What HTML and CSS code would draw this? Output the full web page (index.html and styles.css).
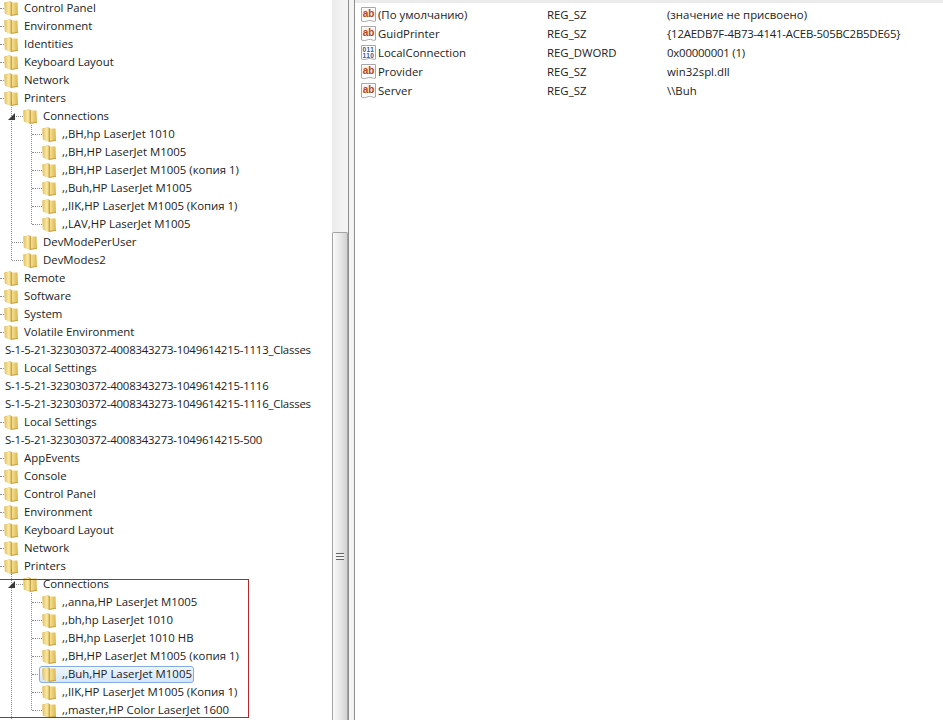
FILE: index.html
```html
<!DOCTYPE html>
<html lang="ru">
<head>
<meta charset="utf-8">
<title>Registry Editor</title>
<link rel="stylesheet" href="styles.css">
</head>
<body>
<svg class="defs" width="0" height="0" aria-hidden="true">
  <defs>
    <linearGradient id="fb" x1="0" y1="0" x2="1" y2="0"><stop offset="0" stop-color="#d3a93f"/><stop offset=".6" stop-color="#f3dc8b"/><stop offset="1" stop-color="#dcb44e"/></linearGradient>
    <linearGradient id="ff" x1="0" y1="0" x2="1" y2="0"><stop offset="0" stop-color="#e6c25a"/><stop offset=".65" stop-color="#f9e9a8"/><stop offset="1" stop-color="#eccb68"/></linearGradient>
    <symbol id="folder" viewBox="0 0 14 15">
      <path d="M.5 1.500 7 0l.5 1.500h6L14 13.500 7.500 15 1 12.500Z" fill="url(#fb)"/>
      <path d="M.5 1.500 7 .5v14.300L.8 12.500Z" fill="url(#ff)"/>
      <path d="M7.300 14.800V1" stroke="#b08a35" stroke-width=".8" fill="none"/>
      <path d="M7.500 14.300 14 13.300" stroke="#c99f40" stroke-width="1" fill="none"/>
    </symbol>
    <symbol id="ab" viewBox="0 0 16 16">
      <path d="M.5.500h14v13.500c-2 1.500-4.500-1.500-7-.5s-5 1.500-7 .5Z" fill="#fff" stroke="#a8a8a8"/>
      <path d="M1.500 2h12v8h-12Z" fill="#fdf1ea"/>
      <text x="7.500" y="9.500" text-anchor="middle" class="abtext">ab</text>
    </symbol>
    <symbol id="bin" viewBox="0 0 16 16">
      <path d="M.5.500h14v13.500c-2 1.500-4.500-1.500-7-.5s-5 1.500-7 .5Z" fill="#fff" stroke="#a8a8a8"/>
      <text x="7.500" y="6.500" text-anchor="middle" class="bintext">011</text>
      <text x="7.500" y="12.500" text-anchor="middle" class="bintext">110</text>
    </symbol>
  </defs>
</svg>
<main class="window">
  <nav class="tree">
    <div class="row l0"><svg class="folder"><use href="#folder"/></svg><span>Control Panel</span></div>
    <div class="row l0"><svg class="folder"><use href="#folder"/></svg><span>Environment</span></div>
    <div class="row l0"><svg class="folder"><use href="#folder"/></svg><span>Identities</span></div>
    <div class="row l0"><svg class="folder"><use href="#folder"/></svg><span>Keyboard Layout</span></div>
    <div class="row l0"><svg class="folder"><use href="#folder"/></svg><span>Network</span></div>
    <div class="row l0"><svg class="folder"><use href="#folder"/></svg><span>Printers</span></div>
    <div class="sub">
      <div class="row l1"><i class="arrow"></i><svg class="folder"><use href="#folder"/></svg><span>Connections</span></div>
      <div class="sub2">
        <div class="row l2"><svg class="folder"><use href="#folder"/></svg><span>,,BH,hp LaserJet 1010</span></div>
        <div class="row l2"><svg class="folder"><use href="#folder"/></svg><span>,,BH,HP LaserJet M1005</span></div>
        <div class="row l2"><svg class="folder"><use href="#folder"/></svg><span>,,BH,HP LaserJet M1005 (копия 1)</span></div>
        <div class="row l2"><svg class="folder"><use href="#folder"/></svg><span>,,Buh,HP LaserJet M1005</span></div>
        <div class="row l2"><svg class="folder"><use href="#folder"/></svg><span>,,IIK,HP LaserJet M1005 (Копия 1)</span></div>
        <div class="row l2"><svg class="folder"><use href="#folder"/></svg><span>,,LAV,HP LaserJet M1005</span></div>
      </div>
      <div class="row l1"><svg class="folder"><use href="#folder"/></svg><span>DevModePerUser</span></div>
      <div class="row l1"><svg class="folder"><use href="#folder"/></svg><span>DevModes2</span></div>
    </div>
    <div class="row l0"><svg class="folder"><use href="#folder"/></svg><span>Remote</span></div>
    <div class="row l0"><svg class="folder"><use href="#folder"/></svg><span>Software</span></div>
    <div class="row l0"><svg class="folder"><use href="#folder"/></svg><span>System</span></div>
    <div class="row l0"><svg class="folder"><use href="#folder"/></svg><span>Volatile Environment</span></div>
    <div class="row root"><span>S-1-5-21-323030372-4008343273-1049614215-1113_Classes</span></div>
    <div class="row l0"><svg class="folder"><use href="#folder"/></svg><span>Local Settings</span></div>
    <div class="row root"><span>S-1-5-21-323030372-4008343273-1049614215-1116</span></div>
    <div class="row root"><span>S-1-5-21-323030372-4008343273-1049614215-1116_Classes</span></div>
    <div class="row l0"><svg class="folder"><use href="#folder"/></svg><span>Local Settings</span></div>
    <div class="row root"><span>S-1-5-21-323030372-4008343273-1049614215-500</span></div>
    <div class="row l0"><svg class="folder"><use href="#folder"/></svg><span>AppEvents</span></div>
    <div class="row l0"><svg class="folder"><use href="#folder"/></svg><span>Console</span></div>
    <div class="row l0"><svg class="folder"><use href="#folder"/></svg><span>Control Panel</span></div>
    <div class="row l0"><svg class="folder"><use href="#folder"/></svg><span>Environment</span></div>
    <div class="row l0"><svg class="folder"><use href="#folder"/></svg><span>Keyboard Layout</span></div>
    <div class="row l0"><svg class="folder"><use href="#folder"/></svg><span>Network</span></div>
    <div class="row l0"><svg class="folder"><use href="#folder"/></svg><span>Printers</span></div>
    <div class="sub sub-open">
      <div class="row l1"><i class="arrow"></i><svg class="folder"><use href="#folder"/></svg><span>Connections</span></div>
      <div class="sub2">
        <div class="row l2"><svg class="folder"><use href="#folder"/></svg><span>,,anna,HP LaserJet M1005</span></div>
        <div class="row l2"><svg class="folder"><use href="#folder"/></svg><span>,,bh,hp LaserJet 1010</span></div>
        <div class="row l2"><svg class="folder"><use href="#folder"/></svg><span>,,BH,hp LaserJet 1010 НВ</span></div>
        <div class="row l2"><svg class="folder"><use href="#folder"/></svg><span>,,BH,HP LaserJet M1005 (копия 1)</span></div>
        <div class="row l2"><div class="selected"><svg class="folder"><use href="#folder"/></svg><span>,,Buh,HP LaserJet M1005</span></div></div>
        <div class="row l2"><svg class="folder"><use href="#folder"/></svg><span>,,IIK,HP LaserJet M1005 (Копия 1)</span></div>
        <div class="row l2"><svg class="folder"><use href="#folder"/></svg><span>,,master,HP Color LaserJet 1600</span></div>
      </div>
      <div class="marker"></div>
    </div>
  </nav>
  <div class="scrollbar">
    <div class="track"></div>
    <div class="thumb"><div class="grip"></div></div>
  </div>
  <div class="splitter"></div>
  <section class="values">
    <div class="value"><svg class="vicon"><use href="#ab"/></svg><span class="name">(По умолчанию)</span><span class="type">REG_SZ</span><span>(значение не присвоено)</span></div>
    <div class="value"><svg class="vicon"><use href="#ab"/></svg><span class="name">GuidPrinter</span><span class="type">REG_SZ</span><span class="tight">{12AEDB7F-4B73-4141-ACEB-505BC2B5DE65}</span></div>
    <div class="value"><svg class="vicon"><use href="#bin"/></svg><span class="name">LocalConnection</span><span class="type">REG_DWORD</span><span class="tight">0x00000001 (1)</span></div>
    <div class="value"><svg class="vicon"><use href="#ab"/></svg><span class="name">Provider</span><span class="type">REG_SZ</span><span>win32spl.dll</span></div>
    <div class="value"><svg class="vicon"><use href="#ab"/></svg><span class="name">Server</span><span class="type">REG_SZ</span><span>\\Buh</span></div>
  </section>
</main>
</body>
</html>
```
FILE: styles.css
```css
* { box-sizing: border-box; }
html, body { margin: 0; height: 720px; overflow: hidden; background: #fff; }
body { font: 11.4px/18px "Open Sans", "Noto Sans", sans-serif; color: #222; }
.defs { position: absolute; }
.window { display: flex; height: 720px; overflow: hidden; }

.tree { width: 332px; flex: none; overflow: hidden; margin-top: -1px; }
.row { position: relative; display: flex; align-items: center; height: 18px; white-space: nowrap; }
.folder { width: 14px; height: 15px; flex: none; margin-right: 6px; }
.root { padding-left: 5px; letter-spacing: -.21px; }
.l0 { padding-left: 4px; }
.l1 { padding-left: 23px; }
.l2 { padding-left: 42px; }
.l0::before, .l1::before, .l2::before {
  content: ""; position: absolute; top: 9px; height: 0;
  border-top: 1px dotted #8f8f8f;
}
.l0::before { left: 0; width: 4px; }
.l1::before { left: 12px; width: 11px; }
.l2::before { left: 32px; width: 10px; }

.sub, .sub2 { position: relative; }
.sub::before, .sub2::before {
  content: ""; position: absolute; top: -6px; bottom: 9px;
  border-left: 1px dotted #8f8f8f;
}
.sub::before { left: 11px; }
.sub2::before { left: 31px; top: 0; }
.sub-open { height: 200px; }
.sub-open::before { bottom: 0; }

.arrow {
  position: absolute; left: 8px; top: 6px; width: 0; height: 0; z-index: 1;
  border-style: solid; border-width: 0 0 7px 7px;
  border-color: transparent transparent #3a3a3a transparent;
}
.selected {
  display: flex; align-items: center; height: 17px; margin-left: -3px; padding: 0 1px 0 2px;
  border: 1px solid #84acdd; border-radius: 3px;
  background: linear-gradient(#eef5fd, #d3e6fb);
  position: relative;
}
.marker {
  position: absolute; left: -1px; top: 4px; width: 250px; height: 139px;
  border: 1px solid #b8252b; pointer-events: none;
}

.scrollbar { position: relative; width: 16px; flex: none; background: #f0f0f0; }
.track { height: 232px; background: linear-gradient(90deg, #ececec, #f6f6f6); }
.thumb {
  height: 488px; border: 1px solid #a3a3a3; border-bottom: 0; border-radius: 2px 2px 0 0;
  background: linear-gradient(90deg, #fafafa, #e6e6e6 55%, #d2d2d2);
  position: relative;
}
.grip {
  position: absolute; left: 3px; top: 320px; width: 8px; height: 7px;
  background: repeating-linear-gradient(#666 0 1px, #f4f4f4 1px 3px);
}
.splitter {
  width: 7px; flex: none; background: #f4f4f4;
  border-left: 1px solid #8e8e8e; border-right: 1px solid #8e8e8e;
}
.values { flex: 1; padding: 2px 0 0 6px; border-top: 3px solid #ebebeb; }
.value { display: flex; align-items: center; height: 19px; white-space: nowrap; }
.vicon { width: 16px; height: 16px; flex: none; margin-right: 1px; }
.name { width: 169px; flex: none; }
.type { width: 120px; flex: none; }
.tight { letter-spacing: -.2px; }
.abtext { font: bold 10px "Liberation Sans", sans-serif; fill: #b8431d; }
.bintext { font: bold 6.500px "Liberation Sans", sans-serif; fill: #2a5aa8; letter-spacing: .5px; }
```
